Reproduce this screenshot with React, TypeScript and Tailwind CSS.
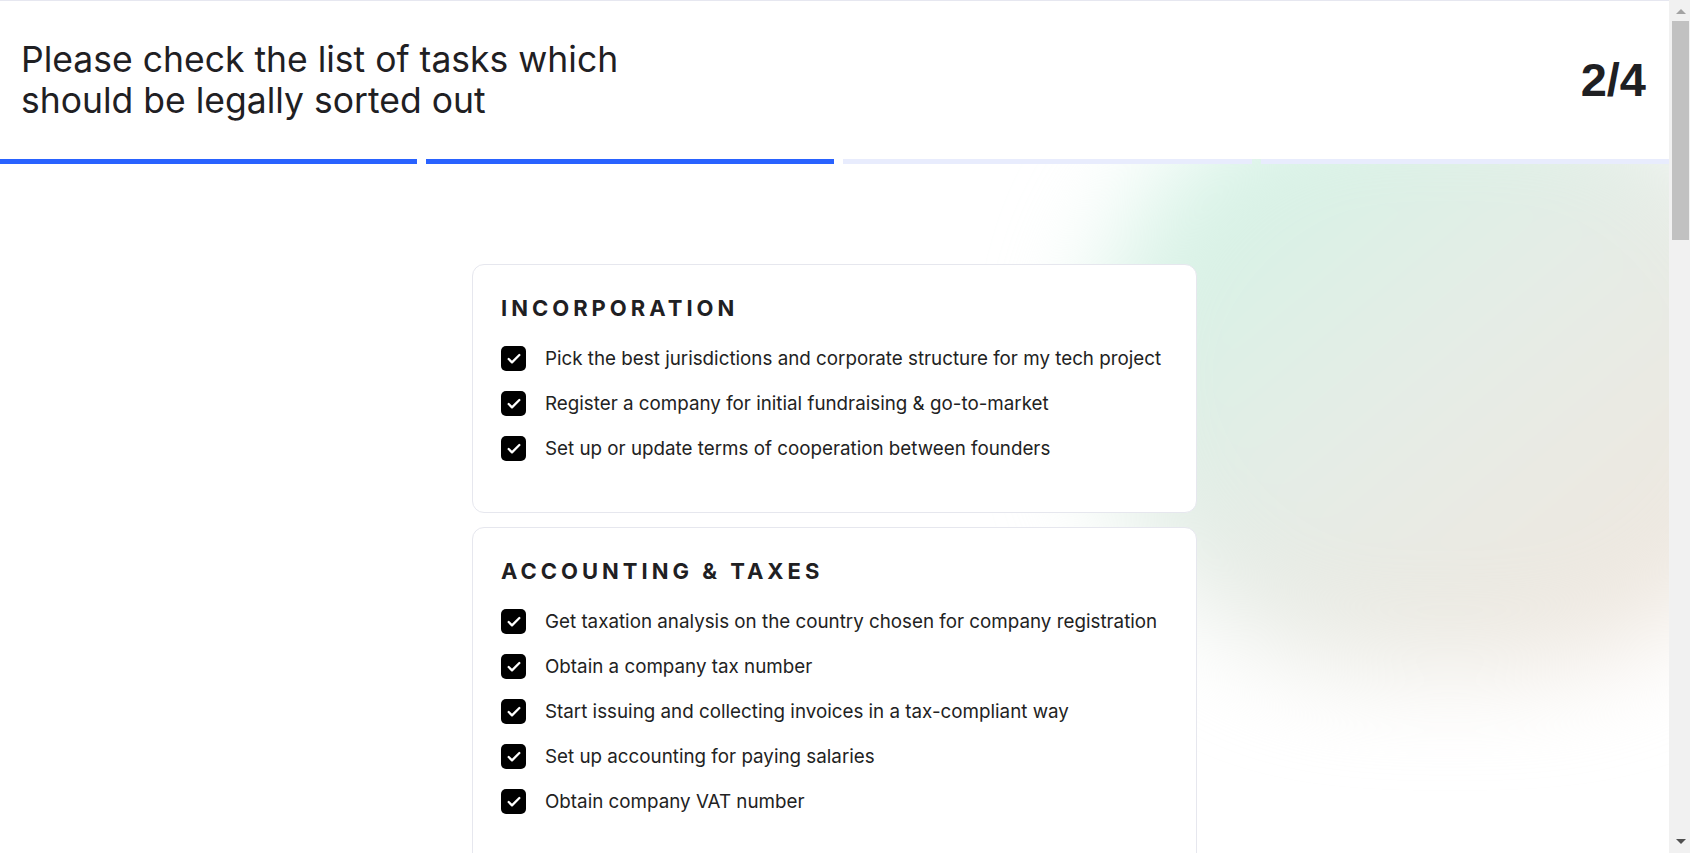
import { Check } from "lucide-react";

const sections = [
  {
    title: "INCORPORATION",
    items: [
      "Pick the best jurisdictions and corporate structure for my tech project",
      "Register a company for initial fundraising & go-to-market",
      "Set up or update terms of cooperation between founders",
    ],
  },
  {
    title: "ACCOUNTING & TAXES",
    items: [
      "Get taxation analysis on the country chosen for company registration",
      "Obtain a company tax number",
      "Start issuing and collecting invoices in a tax-compliant way",
      "Set up accounting for paying salaries",
      "Obtain company VAT number",
    ],
  },
];

function Checkbox() {
  return (
    <div className="w-[25px] h-[25px] shrink-0 rounded-[5px] bg-black flex items-center justify-center">
      <Check className="w-4 h-4 text-white" strokeWidth={3.4} />
    </div>
  );
}

function Scrollbar() {
  return (
    <div className="w-[21px] shrink-0 h-full bg-[#f1f1f1] flex flex-col items-center">
      <div className="h-[21px] shrink-0 flex justify-center pt-[9px] pl-[2px]">
        <div className="w-0 h-0 border-x-[5px] border-x-transparent border-b-[5px] border-b-[#a3a3a3]" />
      </div>
      <div className="w-[17px] h-[219px] ml-[2px] bg-[#c1c1c1]" />
      <div className="flex-1" />
      <div className="h-[21px] shrink-0 flex justify-center pt-[7px] pl-[2px]">
        <div className="w-0 h-0 border-x-[5px] border-x-transparent border-t-[5px] border-t-[#505050]" />
      </div>
    </div>
  );
}

export default function App() {
  return (
    <div className="flex h-screen overflow-hidden bg-white">
      <div className="relative flex-1 h-full overflow-hidden font-['Inter',sans-serif] border-t border-[#e6e7f0]">
        {/* soft background blob */}
        <div className="absolute left-[1090px] top-[80px] w-[720px] h-[590px] rounded-full bg-gradient-to-br from-[#cdf6e6] via-[#e6ece6] to-[#f3e5dc] blur-[50px]" />

        <header className="relative z-10 bg-white">
          <div className="h-[158px] flex items-center justify-between pl-[21px] pr-[23px]">
            <h1 className="text-[35.5px] leading-[41px] text-[#1f2023] font-normal">
              Please check the list of tasks which
              <br />
              should be legally sorted out
            </h1>
            <span className="font-['Liberation_Sans',Arial,sans-serif] font-bold text-[47px] text-[#1f2023]">
              2/4
            </span>
          </div>
        </header>
        <div className="relative z-10 flex gap-[9px]">
          <div className="h-[5px] w-[417px] bg-[#2962ff]" />
          <div className="h-[5px] flex-1 bg-[#2962ff]" />
          <div className="h-[5px] flex-1 bg-[#e8ecfd]" />
          <div className="h-[5px] flex-1 bg-[#e8ecfd]" />
        </div>

        <main className="relative z-10 flex flex-col items-center gap-[14px] pt-[100px]">
          {sections.map((section) => (
            <div
              key={section.title}
              className="w-[725px] bg-white border border-[#e6e7ee] rounded-[12px] pl-[28px] pr-[28px] pt-[30px] pb-[51px]"
            >
              <h2 className="text-[22px] font-bold tracking-[4px] text-[#1f2023] leading-[27px]">
                {section.title}
              </h2>
              <div className="mt-[24px] flex flex-col gap-[20px]">
                {section.items.map((item) => (
                  <div key={item} className="flex items-center gap-[19px] h-[25px]">
                    <Checkbox />
                    <span className="text-[18.8px] text-[#222222] leading-6">{item}</span>
                  </div>
                ))}
              </div>
            </div>
          ))}
        </main>
      </div>
      <Scrollbar />
    </div>
  );
}
